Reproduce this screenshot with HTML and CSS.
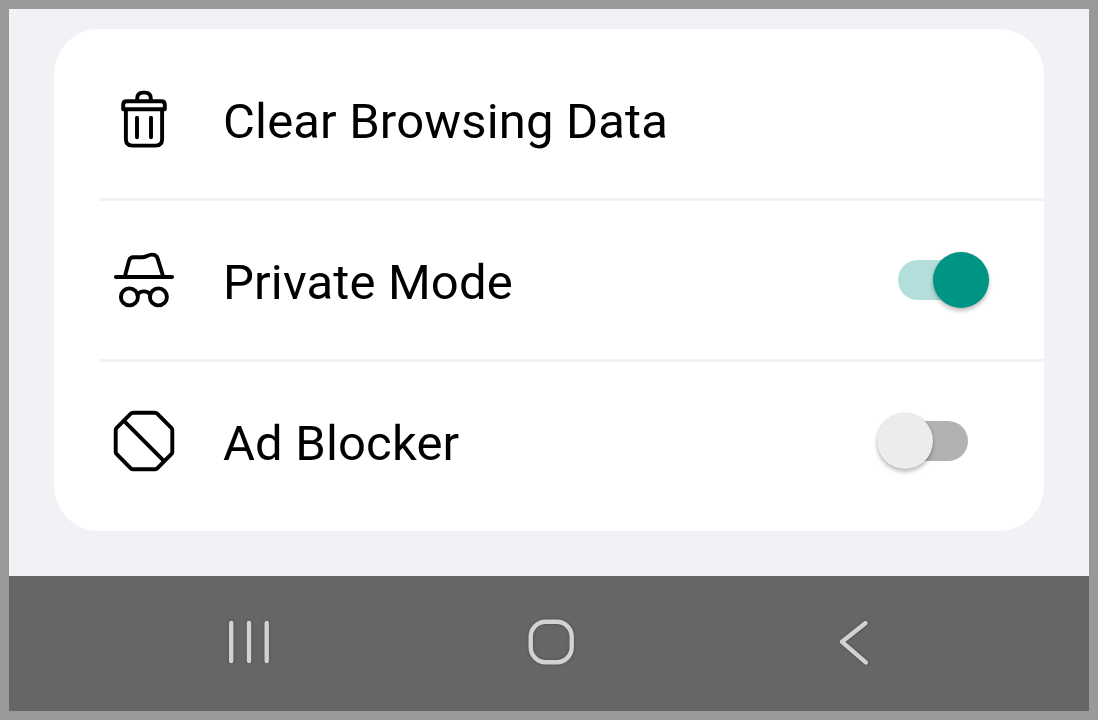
FILE: index.html
```html
<!DOCTYPE html>
<html lang="en">
<head>
    <meta charset="UTF-8">
    <meta name="viewport" content="width=device-width, initial-scale=1.0">
    <title>Settings</title>
    <link rel="stylesheet" href="styles.css">
</head>
<body>
    <main class="screen">
        <div class="card">
            <div class="row">
                <svg class="icon" viewBox="0 0 66 66">
                    <path d="M26.2 14.5V12.4Q26.2 6.6 32 6.6H34Q39.8 6.6 39.8 12.4V14.5"/>
                    <path d="M12.2 23.3V18.7Q12.2 15.2 15.7 15.2H50.3Q53.8 15.2 53.8 18.7V23.3Z"/>
                    <path d="M14.9 23.5V53.3Q14.9 59.6 21.2 59.6H44.8Q51.1 59.6 51.1 53.3V23.5"/>
                    <path d="M26 31.6V51.2M40 31.6V51.2"/>
                </svg>
                <span class="label">Clear Browsing Data</span>
            </div>
            <div class="row">
                <svg class="icon" viewBox="0 0 66 66">
                    <path d="M14 29L18.1 13.5Q19.1 10.3 22.3 10.3H31C35.5 10.3 36.5 7.6 41 7.6Q45.3 7.6 46.6 11.4L52 29"/>
                    <path d="M4.9 30H61.1"/>
                    <circle cx="18.4" cy="49.9" r="8.5"/>
                    <circle cx="47.4" cy="49.9" r="8.5"/>
                    <path d="M26.6 47.8Q28.6 44.4 32.9 44.4T39.2 47.8"/>
                </svg>
                <span class="label">Private Mode</span>
                <div class="toggle on"><div class="thumb"></div></div>
            </div>
            <div class="row">
                <svg class="icon" viewBox="0 0 66 66">
                    <path d="M22.3 4.7H43.7Q45.2 4.7 46.2 5.7L60.3 19.8Q61.3 20.8 61.3 22.3V43.7Q61.3 45.2 60.3 46.2L46.2 60.3Q45.2 61.3 43.7 61.3H22.3Q20.8 61.3 19.8 60.3L5.7 46.2Q4.7 45.2 4.7 43.7V22.3Q4.7 20.8 5.7 19.8L19.8 5.7Q20.8 4.7 22.3 4.7Z"/>
                    <path d="M13.2 13.2L52.8 52.8"/>
                </svg>
                <span class="label">Ad Blocker</span>
                <div class="toggle"><div class="thumb"></div></div>
            </div>
        </div>
    </main>
    <nav class="navbar">
        <svg class="nav-icon" viewBox="0 0 60 60">
            <path d="M12.2 11V49M30 11V49M47.7 11V49"/>
        </svg>
        <svg class="nav-icon" viewBox="0 0 60 60">
            <rect x="8.7" y="9.7" width="41" height="40.6" rx="15"/>
        </svg>
        <svg class="nav-icon" viewBox="0 0 60 60">
            <path d="M41.3 11.2L18 29.8L41.8 50.4"/>
        </svg>
    </nav>
</body>
</html>
```

FILE: styles.css
```css
* {
    box-sizing: border-box;
}
body {
    margin: 0;
    height: 100vh;
    padding: 9px;
    display: flex;
    flex-direction: column;
    background: #999;
    font-family: Roboto, sans-serif;
}
.screen {
    flex: 1;
    padding: 20px 45px 45px;
    background: #f1f2f6;
}
.card {
    height: 502px;
    padding: 11px 0 11px 45px;
    border-radius: 45px;
    background: #fff;
}
.row {
    display: flex;
    align-items: center;
    height: 161px;
    padding: 0 55px 0 12px;
    border-bottom: 3px solid #f3f3f5;
}
.row:last-child {
    height: 158px;
    border-bottom: none;
}
.icon {
    width: 66px;
    height: 66px;
    margin-right: 46px;
    fill: none;
    stroke: #000;
    stroke-width: 3.9;
    stroke-linecap: round;
    stroke-linejoin: round;
}
.label {
    flex: 1;
    padding-top: 5px;
    font-size: 49px;
    line-height: 57px;
    letter-spacing: 0.16px;
    color: #000;
}
.toggle {
    display: flex;
    align-items: center;
    width: 70px;
    height: 40px;
    margin-right: 21px;
    border-radius: 20px;
    background: #b2b2b2;
}
.thumb {
    flex-shrink: 0;
    width: 56.6px;
    height: 56.6px;
    margin-left: -21.5px;
    border-radius: 50%;
    background: #ececec;
    box-shadow: 0 3px 4px rgba(0,0,0,0.25), 0 0 2px rgba(0,0,0,0.12);
}
.toggle.on {
    background: #b2dfdb;
}
.toggle.on .thumb {
    margin-left: 34.7px;
    background: #009485;
}
.navbar {
    display: flex;
    align-items: center;
    justify-content: space-between;
    height: 135px;
    padding: 0 205px 3px 210px;
    background: #666;
}
.nav-icon {
    width: 60px;
    height: 60px;
    fill: none;
    stroke: #d2d2d2;
    stroke-width: 4.4;
    stroke-linecap: round;
    stroke-linejoin: round;
    filter: drop-shadow(0 0 1.5px rgba(0,0,0,0.3));
}
```
